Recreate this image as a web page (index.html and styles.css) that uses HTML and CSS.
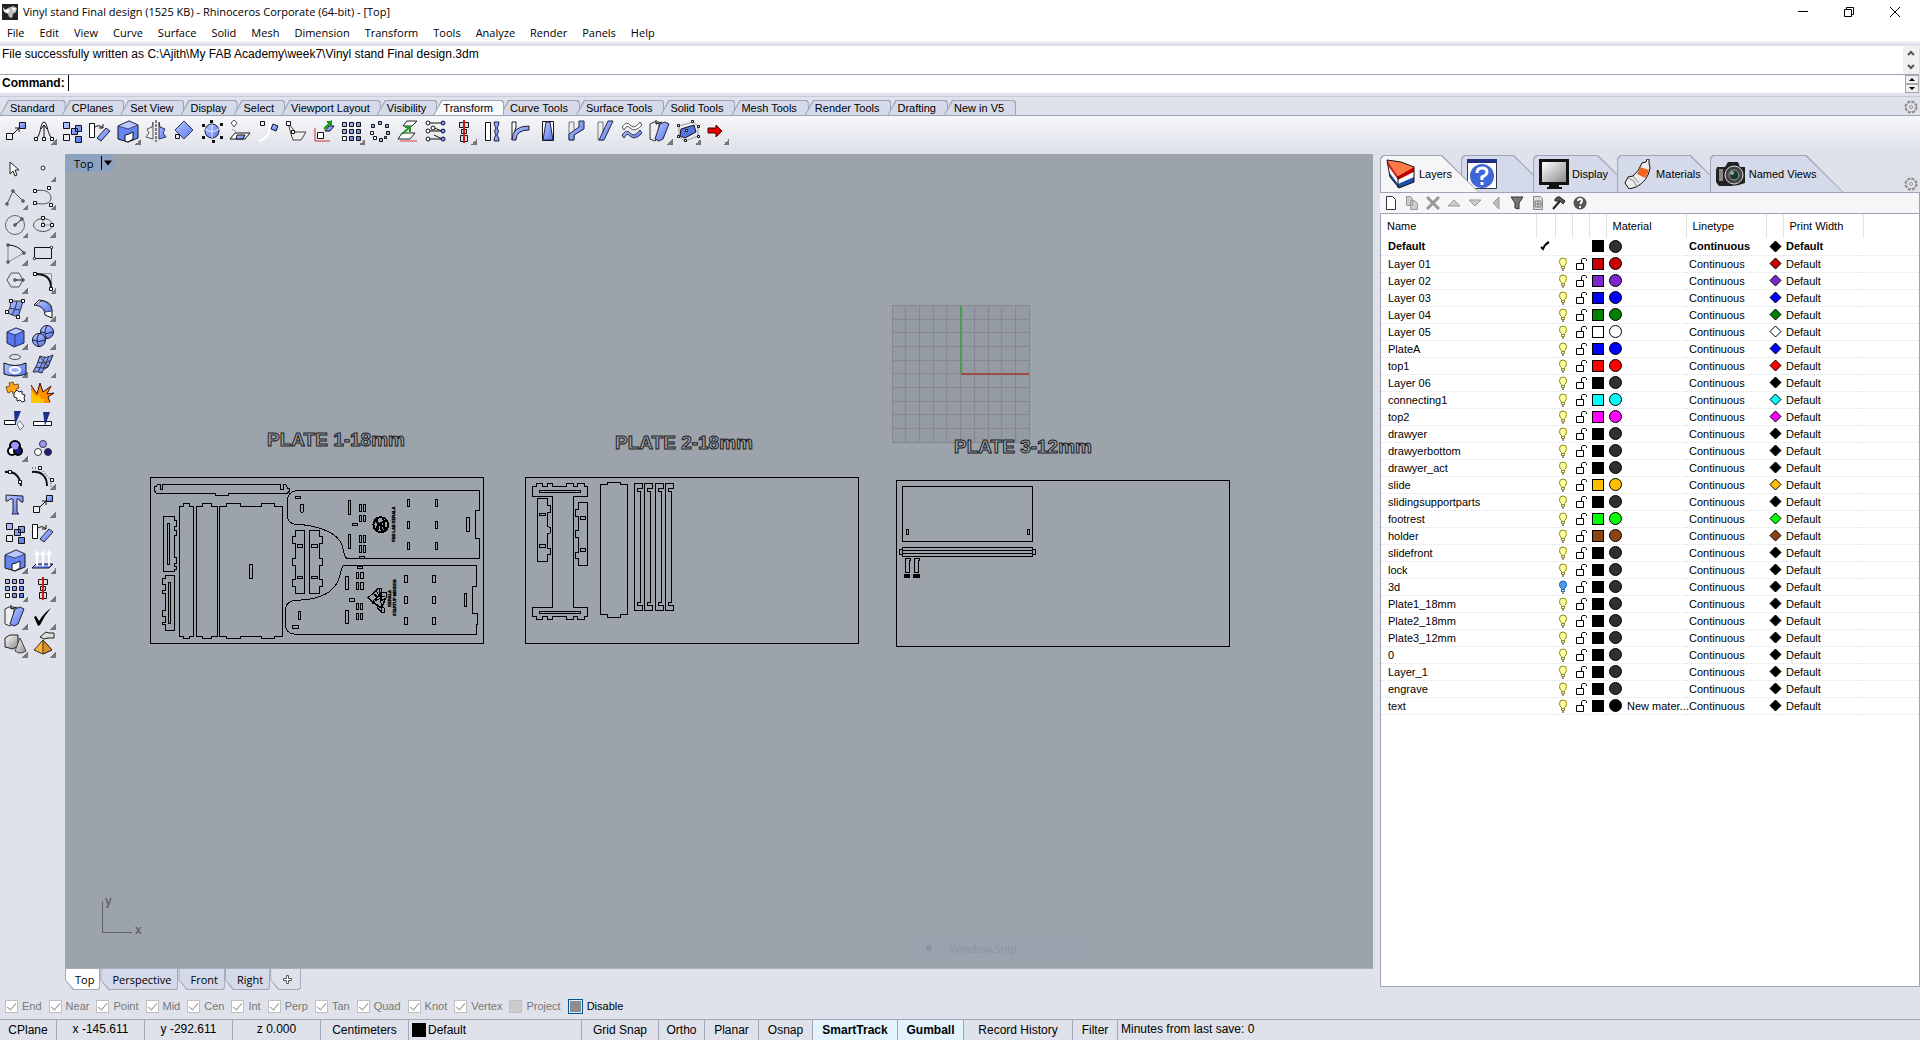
FILE: index.html
```html
<!DOCTYPE html>
<html lang="en">
<head>
    <meta charset="UTF-8">
    <title>Vinyl stand Final design (1525 KB) - Rhinoceros Corporate (64-bit) - [Top]</title>
    <link rel="stylesheet" href="styles.css">
</head>
<body>
<!-- icon sprite -->
<svg class="sprite" aria-hidden="true">
    <defs>
        <linearGradient id="blue" x1="0" y1="0" x2="1" y2="1"><stop offset="0" stop-color="#b9c8ff"/><stop offset="1" stop-color="#5577ee"/></linearGradient>
        <linearGradient id="grey" x1="0" y1="0" x2="1" y2="1"><stop offset="0" stop-color="#ffffff"/><stop offset="1" stop-color="#8a8a8a"/></linearGradient>
    </defs>
    <symbol id="cursor" viewBox="0 0 28 28"><path d="M9 8v12l3-3 2 5 2-1-2-5h4z" fill="#fff" stroke="#222"/></symbol>
    <symbol id="point" viewBox="0 0 28 28"><circle cx="14" cy="14" r="2" fill="#fff" stroke="#222"/></symbol>
    <symbol id="polyline" viewBox="0 0 28 28"><path d="M6 22l6-13 10 10" fill="none" stroke="#555"/><g fill="#fff" stroke="#111"><circle cx="6" cy="22" r="1.2"/><circle cx="12" cy="9" r="1.2"/><circle cx="22" cy="19" r="1.2"/></g></symbol>
    <symbol id="curve" viewBox="0 0 28 28"><path d="M6 9c8-2 16 0 16 7 0 6-8 7-16 5" fill="none" stroke="#555"/><path class="pt" d="M4.500 7.500h3v3h-3zM18.500 4.500h3v3h-3zM4.500 19.500h3v3h-3zM20.500 21.500h3v3h-3z"/></symbol>
    <symbol id="circle" viewBox="0 0 28 28"><circle cx="14" cy="15" r="9.500" fill="none" stroke="#666"/><path d="M14 15l7-6" stroke="#111"/><g fill="#fff" stroke="#111"><circle cx="14" cy="15" r="1.200"/><circle cx="21" cy="9" r="1.200"/></g></symbol>
    <symbol id="ellipse" viewBox="0 0 28 28"><ellipse cx="14" cy="15" rx="9.500" ry="6.500" fill="none" stroke="#555"/><path d="M14 8v7h9" fill="none" stroke="#888"/><path class="pt" d="M12.500 6.500h3v3h-3zM12.500 13.500h3v3h-3zM21.500 13.500h3v3h-3z"/></symbol>
    <symbol id="arc" viewBox="0 0 28 28"><path d="M7 7v17l16-9" fill="none" stroke="#888"/><path d="M7 7q10 0 16 8" fill="none" stroke="#111"/><g fill="#fff" stroke="#111"><circle cx="7" cy="7" r="1.200"/><circle cx="7" cy="24" r="1.200"/><circle cx="23" cy="15" r="1.200"/></g></symbol>
    <symbol id="rectangle" viewBox="0 0 28 28"><path d="M5.500 9.500h17v11h-17z" fill="none" stroke="#111"/><g fill="#fff" stroke="#111"><circle cx="22.500" cy="9.500" r="1.200"/><circle cx="5.500" cy="20.500" r="1.200"/></g></symbol>
    <symbol id="polygon" viewBox="0 0 28 28"><path d="M6 14l4-7h8l4 7-4 7h-8z" fill="none" stroke="#555"/><path d="M14 14h8" stroke="#111"/><g fill="#fff" stroke="#111"><circle cx="14" cy="14" r="1.200"/><circle cx="22" cy="14" r="1.200"/></g></symbol>
    <symbol id="fillet" viewBox="0 0 28 28"><path d="M6 7.500h16.500v14" fill="none" stroke="#999"/><path d="M6 8c10 0 16 3 16 14" fill="none" stroke="#111" stroke-width="2"/><path class="pt" d="M4.500 6.500h3v3h-3zM20.500 21.500h3v3h-3z"/></symbol>
    <symbol id="surface" viewBox="0 0 28 28"><path d="M10 7h12q-2 8-5 16l-11-4q4-5 4-12z" fill="url(#blue)" stroke="#334"/><path d="M16 7q-1 8-5 14M8 14l11 2" fill="none" stroke="#334"/><path class="pt" d="M8.500 5.500h3v3h-3zM20.500 5.500h3v3h-3zM15.500 21.500h3v3h-3zM4.500 16.500h3v3h-3z"/></symbol>
    <symbol id="sweep" viewBox="0 0 28 28"><path d="M5 11l5-5q13 1 13 10v8l-7-3q0-9-11-10z" fill="#fff" stroke="#111"/><path d="M12 7q10 1 11 10l-7 1q-1-5-9-7z" fill="url(#blue)" stroke="#446"/></symbol>
    <symbol id="box" viewBox="0 0 28 28"><path d="M6 10l9-4 8 3v12l-10 4-7-4z" fill="#5577ee" stroke="#224"/><path d="M6 10l9-4 8 3-9 4z" fill="#b9c8ff" stroke="#336"/><path d="M14 13v12" stroke="#336"/></symbol>
    <symbol id="spheres" viewBox="0 0 28 28"><g fill="url(#blue)" stroke="#112"><circle cx="18" cy="10" r="6.500"/><circle cx="10" cy="18" r="6.500"/></g><path d="M18 4q-4 6 0 13M12 10q6 3 12 0M10 12q-4 6 0 12M4 18q6 3 12 0" fill="none" stroke="#224"/></symbol>
    <symbol id="project" viewBox="0 0 28 28"><ellipse cx="14" cy="7" rx="5.500" ry="2.500" fill="none" stroke="#555"/><path d="M3 13q11 5 22 0v11q-11 4-22 0z" fill="url(#blue)" stroke="#111"/><ellipse cx="14" cy="20" rx="5" ry="3" fill="#9fb4ff" stroke="#fff" stroke-width="2"/></symbol>
    <symbol id="mesh" viewBox="0 0 28 28"><path d="M11 6q6 3 13-1l-5 12q-6 2-6 6-4-2-9-1 5-8 7-16z" fill="url(#blue)" stroke="#223"/><path d="M16 7l-7 15M20 6l-6 13M9 12q6 3 13-2M7 17q6 2 12 0M11 7l8 9" fill="none" stroke="#334"/></symbol>
    <symbol id="join" viewBox="0 0 28 28"><path d="M5 9l4-1-1-3 4-1 1 3 4-1 1 4-3 1 1 4-4 1-1-3-4 2z" fill="#ffa712" stroke="#753"/><path d="M13 15l3-3 2 2 3-1 0 3 3 1-1 3 1 3-3 1-2-2-3 1 0-3-3-1z" fill="#fff" stroke="#222"/></symbol>
    <symbol id="explode" viewBox="0 0 28 28"><path d="M2 25V7l6 9 3-11 3 9 8-6-4 8 7-1-6 4 2 6z" fill="#ff8c00"/><path d="M2 7l6 9 3-11 3 9 8-6-4 8 7-1-6 4 2 5" fill="none" stroke="#311"/><path d="M2 25V12l5 7 3-3 2 5 4 0-2 4z" fill="#ffc400"/></symbol>
    <symbol id="trim" viewBox="0 0 28 28"><path d="M3.500 14.500h11v4h-11z" fill="#fff" stroke="#111"/><path d="M16 18l3-3 4 5-4 4z" fill="#eee" stroke="#777"/><path d="M13 5h7l-6 14z" fill="#1c2f88"/></symbol>
    <symbol id="split" viewBox="0 0 28 28"><path d="M4.500 15.500h18v4h-18z" fill="#fff" stroke="#111"/><path d="M14 6h7l-5 14z" fill="#1c2f88"/></symbol>
    <symbol id="group" viewBox="0 0 28 28"><g stroke="#000" stroke-width="2"><circle cx="14" cy="12" r="5" fill="#99f"/><circle cx="11" cy="17" r="4" fill="#fff"/><circle cx="17" cy="17" r="4" fill="#1b1b80"/></g><circle cx="14" cy="12" r="3.500" fill="#99f"/></symbol>
    <symbol id="ungroup" viewBox="0 0 28 28"><g stroke="#333"><circle cx="14" cy="10" r="3.500" fill="#99f"/><circle cx="9" cy="18" r="3.500" fill="#fff"/><circle cx="19" cy="18" r="3.500" fill="#1b1b80"/></g></symbol>
    <symbol id="editpts" viewBox="0 0 28 28"><path d="M4 10c10-1 15 4 16 14" fill="none" stroke="#111" stroke-width="2"/><path class="pt" d="M7.500 8.500h3v3h-3zM17.500 18.500h3v3h-3z"/></symbol>
    <symbol id="ctrlpts" viewBox="0 0 28 28"><path d="M3 6h8l11 12v8" fill="none" stroke="#111" stroke-dasharray="1 2"/><path d="M3 10c9-1 15 4 15 14" fill="none" stroke="#111" stroke-width="2"/><path class="pt" d="M9.500 4.500h3v3h-3zM21.500 16.500h3v3h-3z"/></symbol>
    <symbol id="texttool" viewBox="0 0 28 28"><path d="M5 5l17 1v6h-2l-2-3-2 0v13l2 2h-7l1-2V9l-3 0-2 2h-2z" fill="url(#blue)" stroke="#223"/></symbol>
    <symbol id="move" viewBox="0 0 28 28"><path d="M11 17l6-6m-4 0h4v4" fill="none" stroke="#111"/><path d="M4.500 16.500h6v6h-6z" fill="#eee" stroke="#111"/><path d="M17.500 5.500h6v6h-6z" fill="url(#blue)" stroke="#111"/></symbol>
    <symbol id="copy" viewBox="0 0 28 28"><g fill="url(#blue)" stroke="#111"><path d="M5.500 5.500h6v6h-6zM17.500 8.500h6v6h-6zM13.500 11.500h6v6h-6zM17.500 19.500h6v6h-6z"/></g><path d="M5.500 17.500h6v6h-6z" fill="#eee" stroke="#111"/></symbol>
    <symbol id="rotate" viewBox="0 0 28 28"><path d="M3.500 6.500h5v14h-5z" fill="#fff" stroke="#111"/><path d="M9 10q4-3 8 1m0-4v4h-4" fill="none" stroke="#111"/><path d="M11 21l9-10 4 3-9 10z" fill="url(#blue)" stroke="#223"/></symbol>
    <symbol id="solidbox" viewBox="0 0 28 28"><path d="M4 9l11-5 9 4v13l-10 4-10-3z" fill="#6685f5" stroke="#111"/><path d="M4 9l11-5 9 4-10 4z" fill="#b9c8ff" stroke="#446"/><path d="M11 18l4-1 4-2v7l-5 3-3-1z" fill="#fff" stroke="#111"/></symbol>
    <symbol id="extrude" viewBox="0 0 28 28"><path d="M3 22l4-4h17l-4 4z" fill="url(#blue)" stroke="#113"/><path d="M8 20V7M14 20V7M20 20V7M6 9l2-3 2 3M12 9l2-3 2 3M18 9l2-3 2 3" fill="none" stroke="#fff" stroke-width="2"/></symbol>
    <symbol id="array" viewBox="0 0 28 28"><g fill="url(#blue)" stroke="#111"><path d="M4.500 5.500h4v4h-4zM11.500 5.500h4v4h-4zM18.500 5.500h4v4h-4zM4.500 12.500h4v4h-4zM11.500 12.500h4v4h-4zM18.500 12.500h4v4h-4zM11.500 19.500h4v4h-4zM18.500 19.500h4v4h-4z"/></g><path d="M4.500 19.500h4v4h-4z" fill="#fff" stroke="#111"/></symbol>
    <symbol id="align" viewBox="0 0 28 28"><path d="M9.500 5.500h9v5h-9zM11.500 12.500h5v4h-5zM10.500 18.500h7v6h-7z" fill="#ddd" stroke="#111"/><path d="M14 3v23" stroke="#d01818" stroke-width="2"/></symbol>
    <symbol id="shear" viewBox="0 0 28 28"><path d="M4 7l4-2h5v15l-4 4-5-2z" fill="#eee" stroke="#333"/><path d="M10 3v4l6-2" fill="none" stroke="#111"/><path d="M14 7l5-2 4 2-6 15-4 2-4-2z" fill="url(#blue)" stroke="#223"/></symbol>
    <symbol id="check" viewBox="0 0 28 28"><path d="M5 15l2-1 3 5q5-8 12-13-7 8-11 17l-2 1z" fill="#000"/></symbol>
    <symbol id="shapes" viewBox="0 0 28 28"><path d="M4 8l5-3h8v11l-5 3-8-2z" fill="url(#grey)" stroke="#222"/><path d="M19 8l6 13q-6 4-11 0z" fill="url(#grey)" stroke="#444"/></symbol>
    <symbol id="pyramid" viewBox="0 0 28 28"><path d="M5 20l9-10 9 10-9 4z" fill="#f9b233" stroke="#333"/><path d="M14 10v14l9-4z" fill="#e0902a" stroke="#333"/><path d="M11 7l6-5 3 1h5v5h-6l-4 1z" fill="#ddd" stroke="#222"/></symbol>
    <symbol id="softmove" viewBox="0 0 28 28"><path d="M6 21c5-1 4-16 8-16s3 15 9 16" fill="none" stroke="#111"/><path d="M14 22V8m-3 4l3-4 3 4" fill="none" stroke="#111"/><path class="pt" d="M4.500 20.500h3v3h-3zM12.500 20.500h3v3h-3zM20.500 20.500h3v3h-3z"/></symbol>
    <symbol id="mirror" viewBox="0 0 28 28"><path d="M11 5v17l-7-2 3-4-2-4 5-2z" fill="#eee" stroke="#555"/><path d="M14 3v22" stroke="#111" stroke-dasharray="3 1"/><path d="M17 5v17l7-2-3-4 2-4-5-2z" fill="url(#blue)" stroke="#335"/></symbol>
    <symbol id="diamond" viewBox="0 0 28 28"><path d="M14 4l9 9-9 9-9-9z" fill="url(#blue)" stroke="#335"/><path d="M5.500 17.500h4v4h-4z" fill="#eee" stroke="#111"/></symbol>
    <symbol id="spherepts" viewBox="0 0 28 28"><circle cx="14" cy="14" r="7" fill="url(#blue)" stroke="#113"/><path d="M14 7v14M7 12q7 5 14 0" fill="none" stroke="#eef"/><path d="M4 7h3v3h-3zM12 3h3v3h-3zM22 6h3v3h-3zM4 19h3v3h-3zM14 23h3v3h-3zM22 19h3v3h-3z" fill="#111"/></symbol>
    <symbol id="projectpl" viewBox="0 0 28 28"><path d="M8 3l3 3-3 4-3-4z" fill="#fff" stroke="#555"/><path d="M6 12l4 3" stroke="#999"/><path d="M4 22l5-6h15l-5 6z" fill="#fff" stroke="#111"/><path d="M11 18h8l-2 4h-7z" fill="url(#blue)" stroke="#111"/></symbol>
    <symbol id="orientcrv" viewBox="0 0 28 28"><path d="M5 24q14-4 10-22" fill="none" stroke="#fff" stroke-width="2"/><path class="pt" d="M6.500 4.500h4v4h-4z"/><path d="M19 7l5 2-2 5-5-2z" fill="url(#blue)" stroke="#113"/></symbol>
    <symbol id="orientsrf" viewBox="0 0 28 28"><path d="M6 6l5 6 2 3h11l-5 8h-8l-2-6z" fill="#eee" stroke="#444"/><path d="M4.500 4.500h4v4h-4zM9.500 13.500h3v3h-3z" fill="#fff" stroke="#111"/></symbol>
    <symbol id="remap" viewBox="0 0 28 28"><path d="M5 24V11M5 24h15" fill="none" stroke="#c33"/><path d="M7.500 15.500h6v6h-6z" fill="#fff" stroke="#111"/><path d="M15 14l4-5h5l-4 5z" fill="#8aa0ff" stroke="#111"/><path d="M14 12l7-7v4m0-4h-4" fill="none" stroke="#191" stroke-width="2"/></symbol>
    <symbol id="polar" viewBox="0 0 28 28"><g fill="#9db0ff" stroke="#111"><path d="M12.500 4.500h3v3h-3zM19.500 7.500h3v3h-3zM20.500 14.500h3v3h-3zM13.500 21.500h3v3h-3zM5.500 7.500h3v3h-3zM18.500 19.500h2v2h-2z"/></g><path class="pt" d="M4.500 14.500h3v3h-3zM7.500 19.500h3v3h-3z"/></symbol>
    <symbol id="flow" viewBox="0 0 28 28"><path d="M13 4h10l-5 5H9zM8 16h13l-5 6H4z" fill="#fff" stroke="#222"/><path d="M8 17l8-7m-5 0h5v5" fill="none" stroke="#292" stroke-width="2"/><path d="M6 24h17" stroke="#d44"/></symbol>
    <symbol id="maps" viewBox="0 0 28 28"><path d="M7 6h13M7 14h13M7 22h13M12 11l8 3M12 18l8 4" stroke="#111"/><g fill="#fff" stroke="#111"><circle cx="6" cy="6" r="2"/><circle cx="11" cy="11" r="2"/><circle cx="6" cy="14" r="2"/><circle cx="6" cy="22" r="2"/></g><g fill="#79f" stroke="#113"><circle cx="21" cy="6" r="2"/><circle cx="21" cy="14" r="2"/><circle cx="21" cy="22" r="2"/></g></symbol>
    <symbol id="twist" viewBox="0 0 28 28"><path d="M7.500 5.500h5v18h-5z" fill="#fff" stroke="#111"/><path d="M16 5h5q0 3-2 6 3 3 0 7 2 2 2 6h-5q0-4 2-6-3-4 0-7-2-3-2-6z" fill="#8ba2f5" stroke="#224"/></symbol>
    <symbol id="bend" viewBox="0 0 28 28"><path d="M6 23V5h4v5z" fill="#fff" stroke="#222"/><path d="M6 23q0-14 17-14v4q-13 0-13 10z" fill="url(#blue)" stroke="#223"/></symbol>
    <symbol id="taper" viewBox="0 0 28 28"><path d="M8.500 4.500h11v19h-11z" fill="#fff" stroke="#111"/><path d="M12 5h4l3 18H9z" fill="url(#blue)" stroke="#224"/></symbol>
    <symbol id="stretch" viewBox="0 0 28 28"><path d="M7 5h5v18H7z" fill="#eee" stroke="#777"/><path d="M7 23v-6l10-7V4h5v8l-10 6v5z" fill="url(#blue)" stroke="#224"/></symbol>
    <symbol id="slant" viewBox="0 0 28 28"><path d="M8 5h5v18H8z" fill="#eee" stroke="#777"/><path d="M9 23L18 4h5l-9 19z" fill="url(#blue)" stroke="#224"/></symbol>
    <symbol id="waves" viewBox="0 0 28 28"><path d="M4 10q5-7 9-1 4 3 9-4l2 3q-7 8-12 3-3-4-6 2z" fill="#fff" stroke="#555"/><path d="M4 18q5-7 9-1 4 3 9-4l2 3q-7 8-12 3-3-4-6 2z" fill="url(#blue)" stroke="#335"/></symbol>
    <symbol id="cage" viewBox="0 0 28 28"><path d="M5 9l14-4 5 4v10l-13 5-6-4z" fill="none" stroke="#999"/><path d="M7 12l13-4 2 7-11 6-5-2z" fill="#5577dd" stroke="#112"/><path class="pt" d="M3.500 7.500h2v2h-2zM17.500 3.500h2v2h-2zM23.500 8.500h2v2h-2zM23.500 18.500h2v2h-2zM10.500 22.500h2v2h-2zM3.500 18.500h2v2h-2zM11.500 12.500h2v2h-2z"/></symbol>
    <symbol id="redarrow" viewBox="0 0 28 28"><path d="M6 11h8V8l6 6-6 6v-4H6z" fill="#e30000" stroke="#500"/></symbol>

    <symbol id="gear" viewBox="0 0 14 14"><circle cx="7" cy="7" r="5.500" fill="#eee" stroke="#888" stroke-width="2" stroke-dasharray="3 1.300"/><circle cx="7" cy="7" r="4.500" fill="#e6e8ee" stroke="#aaa"/><circle cx="7" cy="7" r="1.500" fill="#fff" stroke="#888"/></symbol>
    <symbol id="bulb" viewBox="0 0 10 14"><path d="M3.500 9.500v-1q-2-1-2-4a3.500 3.500 0 0 1 7 0q0 3-2 4v1z" fill="var(--glow)" stroke="var(--rim)"/><path d="M3.500 9.500v2h3v-2z" fill="#fff" stroke="var(--rim)"/><path d="M4 13h2" stroke="#333"/></symbol>
    <symbol id="lock" viewBox="0 0 12 14"><path d="M1.500 6.500h7v6h-7z" fill="#fff" stroke="#000"/><path d="M6.500 6V3l1-1.500h3l1 1V4" fill="none" stroke="#000"/></symbol>
    <symbol id="tick" viewBox="0 0 10 10"><path d="M1 6l2 2q2-5 6-7" fill="none" stroke="#000" stroke-width="2"/></symbol>

    <symbol id="newdoc" viewBox="0 0 14 14"><path d="M2.500.500h6l3 3v10h-9z" fill="#fff" stroke="#333"/></symbol>
    <symbol id="newsub" viewBox="0 0 14 14"><path d="M1.500.500h4l2 2v7h-6zM5.500 4.500h4l3 3v6h-7z" fill="#ccc" stroke="#999"/></symbol>
    <symbol id="del" viewBox="0 0 14 14"><path d="M1 1l12 12M13 1L1 13" stroke="#999" stroke-width="3"/></symbol>
    <symbol id="up" viewBox="0 0 14 14"><path d="M1 10l6-6 6 6z" fill="#ccc" stroke="#999"/></symbol>
    <symbol id="down" viewBox="0 0 14 14"><path d="M1 4l6 6 6-6z" fill="#ccc" stroke="#999"/></symbol>
    <symbol id="left" viewBox="0 0 14 14"><path d="M10 1v12L4 7z" fill="#bbb" stroke="#999"/></symbol>
    <symbol id="filter" viewBox="0 0 14 14"><path d="M1 1h12L9 7v6l-4-1V7z" fill="#777" stroke="#333"/></symbol>
    <symbol id="cols" viewBox="0 0 14 14"><path d="M2.500.500h7l2 2v11h-9z" fill="#ddd" stroke="#888"/><path d="M4 5h6v6H4zM4 8h6M7 5v6" fill="none" stroke="#777"/></symbol>
    <symbol id="hammer" viewBox="0 0 14 14"><path d="M1 13L8 5" stroke="#222" stroke-width="2"/><path d="M3 3q4-4 6-1l4 3-2 3-3-3-5 0z" fill="#555" stroke="#222"/></symbol>
    <symbol id="help" viewBox="0 0 14 14"><circle cx="7" cy="7" r="6.500" fill="#555"/><path d="M5 5q0-2 2-2t2 2q0 1-2 3M7 10v2" fill="none" stroke="#fff" stroke-width="2"/></symbol>
</svg>

<header class="titlebar">
    <svg class="logo" viewBox="0 0 16 16"><rect width="16" height="16" fill="#222"/><path d="M1 3l2 3 3-2 5-2 4 2-1 4-3 2-1 4-3-1-1-3-4-2z" fill="#bbb"/><path d="M1 3l2 3 3-1 2 2-3 2-3-2zM10 4l4 0-2 4z" fill="#fff"/></svg>
    <h1>Vinyl stand Final design (1525 KB) - Rhinoceros Corporate (64-bit) - [Top]</h1>
    <div class="winbuttons">
        <button aria-label="Minimize"><svg viewBox="0 0 10 10"><path d="M0 4.500h10"/></svg></button>
        <button aria-label="Restore"><svg viewBox="0 0 10 10"><path d="M.500 2.500h7v7h-7zM2.500 2V.500h7v7H8"/></svg></button>
        <button aria-label="Close"><svg viewBox="0 0 10 10"><path d="M0 0l10 10M10 0L0 10"/></svg></button>
    </div>
</header>
<nav class="menu">
    <button>File</button><button>Edit</button><button>View</button><button>Curve</button><button>Surface</button><button>Solid</button><button>Mesh</button><button>Dimension</button><button>Transform</button><button>Tools</button><button>Analyze</button><button>Render</button><button>Panels</button><button>Help</button>
</nav>

<section class="command">
    <div class="history">
        <p>File successfully written as C:\Ajith\My FAB Academy\week7\Vinyl stand Final design.3dm</p>
        <div class="scroll">
            <button aria-label="Scroll up"><svg viewBox="0 0 8 6"><path d="M1 5l3-3 3 3"/></svg></button>
            <button aria-label="Scroll down"><svg viewBox="0 0 8 6"><path d="M1 1l3 3 3-3"/></svg></button>
        </div>
    </div>
    <div class="prompt">
        <label for="cmd">Command:</label>
        <input type="text" id="cmd">
        <div class="spin">
            <button aria-label="Previous"><svg viewBox="0 0 6 3"><path d="M0 3l3-3 3 3z"/></svg></button>
            <button aria-label="Next"><svg viewBox="0 0 6 3"><path d="M0 0l3 3 3-3z"/></svg></button>
        </div>
    </div>
</section>

<div class="tooltabs">
    <button>Standard</button><button>CPlanes</button><button>Set View</button><button>Display</button><button>Select</button><button>Viewport Layout</button><button>Visibility</button><button class="active">Transform</button><button>Curve Tools</button><button>Surface Tools</button><button>Solid Tools</button><button>Mesh Tools</button><button>Render Tools</button><button>Drafting</button><button>New in V5</button>
    <svg class="gear"><use href="#gear"/></svg>
</div>
<div class="toolbar">
    <button aria-label="Move"><svg><use href="#move"/></svg></button>
    <button class="more" aria-label="Soft move"><svg><use href="#softmove"/></svg></button>
    <button aria-label="Copy"><svg><use href="#copy"/></svg></button>
    <button aria-label="Rotate"><svg><use href="#rotate"/></svg></button>
    <button class="more" aria-label="Scale"><svg><use href="#solidbox"/></svg></button>
    <button aria-label="Mirror"><svg><use href="#mirror"/></svg></button>
    <button aria-label="Orient"><svg><use href="#diamond"/></svg></button>
    <button aria-label="Set points"><svg><use href="#spherepts"/></svg></button>
    <button aria-label="Project to CPlane"><svg><use href="#projectpl"/></svg></button>
    <button aria-label="Orient on curve"><svg><use href="#orientcrv"/></svg></button>
    <button aria-label="Orient on surface"><svg><use href="#orientsrf"/></svg></button>
    <button aria-label="Remap to CPlane"><svg><use href="#remap"/></svg></button>
    <button class="more" aria-label="Array"><svg><use href="#array"/></svg></button>
    <button aria-label="Polar array"><svg><use href="#polar"/></svg></button>
    <button aria-label="Flow along surface"><svg><use href="#flow"/></svg></button>
    <button aria-label="Array along curve"><svg><use href="#maps"/></svg></button>
    <button class="more" aria-label="Align"><svg><use href="#align"/></svg></button>
    <button aria-label="Twist"><svg><use href="#twist"/></svg></button>
    <button aria-label="Bend"><svg><use href="#bend"/></svg></button>
    <button aria-label="Taper"><svg><use href="#taper"/></svg></button>
    <button aria-label="Stretch"><svg><use href="#stretch"/></svg></button>
    <button aria-label="Shear"><svg><use href="#slant"/></svg></button>
    <button aria-label="Smooth"><svg><use href="#waves"/></svg></button>
    <button class="more" aria-label="Deform"><svg><use href="#shear"/></svg></button>
    <button class="more" aria-label="Cage edit"><svg><use href="#cage"/></svg></button>
    <button class="more" aria-label="Next"><svg><use href="#redarrow"/></svg></button>
</div>

<main>
    <aside class="sidebar">
        <button aria-label="Select"><svg><use href="#cursor"/></svg></button>
        <button class="more" aria-label="Point"><svg><use href="#point"/></svg></button>
        <button class="more" aria-label="Polyline"><svg><use href="#polyline"/></svg></button>
        <button class="more" aria-label="Curve"><svg><use href="#curve"/></svg></button>
        <button class="more" aria-label="Circle"><svg><use href="#circle"/></svg></button>
        <button class="more" aria-label="Ellipse"><svg><use href="#ellipse"/></svg></button>
        <button class="more" aria-label="Arc"><svg><use href="#arc"/></svg></button>
        <button class="more" aria-label="Rectangle"><svg><use href="#rectangle"/></svg></button>
        <button class="more" aria-label="Polygon"><svg><use href="#polygon"/></svg></button>
        <button class="more" aria-label="Fillet"><svg><use href="#fillet"/></svg></button>
        <button class="more" aria-label="Surface from points"><svg><use href="#surface"/></svg></button>
        <button class="more" aria-label="Fillet surface"><svg><use href="#sweep"/></svg></button>
        <button class="more" aria-label="Box"><svg><use href="#box"/></svg></button>
        <button class="more" aria-label="Boolean union"><svg><use href="#spheres"/></svg></button>
        <button class="more" aria-label="Project curves"><svg><use href="#project"/></svg></button>
        <button class="more" aria-label="Mesh"><svg><use href="#mesh"/></svg></button>
        <button aria-label="Join"><svg><use href="#join"/></svg></button>
        <button aria-label="Explode"><svg><use href="#explode"/></svg></button>
        <button aria-label="Trim"><svg><use href="#trim"/></svg></button>
        <button aria-label="Split"><svg><use href="#split"/></svg></button>
        <button class="more" aria-label="Group"><svg><use href="#group"/></svg></button>
        <button aria-label="Ungroup"><svg><use href="#ungroup"/></svg></button>
        <button aria-label="Edit points"><svg><use href="#editpts"/></svg></button>
        <button class="more" aria-label="Control points"><svg><use href="#ctrlpts"/></svg></button>
        <button aria-label="Text"><svg><use href="#texttool"/></svg></button>
        <button class="more" aria-label="Move"><svg><use href="#move"/></svg></button>
        <button aria-label="Copy"><svg><use href="#copy"/></svg></button>
        <button aria-label="Rotate"><svg><use href="#rotate"/></svg></button>
        <button class="more" aria-label="Scale"><svg><use href="#solidbox"/></svg></button>
        <button class="more" aria-label="Analyze direction"><svg><use href="#extrude"/></svg></button>
        <button class="more" aria-label="Array"><svg><use href="#array"/></svg></button>
        <button class="more" aria-label="Align"><svg><use href="#align"/></svg></button>
        <button class="more" aria-label="Deform"><svg><use href="#shear"/></svg></button>
        <button class="more" aria-label="Check"><svg><use href="#check"/></svg></button>
        <button class="more" aria-label="Render"><svg><use href="#shapes"/></svg></button>
        <button class="more" aria-label="Properties"><svg><use href="#pyramid"/></svg></button>
    </aside>

    <section class="views">
        <div class="viewport">
            <svg class="drawing">
                <defs>
                    <pattern id="minor" x="67" y="46" width="41.200" height="41.200" patternUnits="userSpaceOnUse">
                        <path d="M9 7v32M17 7v32M25 7v32M33 7v32" stroke="#a3a8ae" stroke-width="2" stroke-dasharray="3 5" fill="none"/>
                    </pattern>
                    <path id="rail" d="M0 190h25v15h-15v9h7v333h-7v9h15v16h-25z"/>
                </defs>

                <!-- plate 1 -->
                <svg x="75" y="266" width="350" height="230" viewBox="0 0 1050 690">
                    <g class="ink">
                        <path d="M31 172h999v498H31z"/>
                        <path d="M52 194h8v14h8v-14h353v14h8v-14h8l5 10h6v10l-6 6h-176v6h-40v-6H49l-6-8v-12h6z"/>
                        <path d="M118 260h12v-9h18v9h13v390h-12v6h-18v-6h-13z"/>
                        <path d="M169 260h18v-9h28v9h18v390h-18v6h-28v-6h-18z"/>
                        <path d="M238 260h21v-9h43v9h62v-9h40v9h24v390h-24v6h-40v-6h-62v6h-43v-6h-21z"/>
                        <path d="M328 433h8v42h-8zM82 310h7v123h-7zM86 487h6v123h-6z"/>
                        <path d="M70 290h32v10h8v20h-8v10h8v17h-8v65h8v18h-8v9h8v10h-8v6H70z"/>
                        <path d="M103 466H76v10h-8v18h8v18h-8v8h8v50h-8v18h8v20h-8v6h8v17h27z"/>
                        <path d="M494 332h-27v18h-9v20h9v45h-9v20h9v43h-9v20h9v22h27z"/>
                        <path d="M508 332h30v18h9v20h-9v45h9v20h-9v43h9v20h-9v22h-30z"/>
                        <path d="M472 374h16v8h-16zM472 469h16v6h-16zM514 374h18v8h-18zM514 469h18v6h-18z"/>
                        <path d="M470 212h549v60h-12v82h12v61H620c-9-6-8-24-14-40-10-30-60-60-142-62-12-2-21-12-21-22v-55c0-12 12-23 27-24z"/>
                        <path d="M610 436h400v63h-12v82h14v32h-2v30H465c-15-2-28-10-28-25v-52c0-14 12-24 30-25 80-2 112-26 128-60 8-20 8-36 15-45z"/>
                        <path d="M466 229h16v6h-16zM625 241h6v42h-6zM657 253h7v22h-7zM670 253h7v22h-7zM657 286h7v18h-7zM670 286h7v18h-7zM637 310h16v6h-16zM625 343h6v42h-6zM657 346h7v20h-7zM670 346h7v20h-7zM657 376h7v20h-7zM670 376h7v20h-7zM658 409h15v6h-15z"/>
                        <path d="M802 238h7v22h-7zM886 238h7v22h-7zM802 304h7v20h-7zM886 304h7v20h-7zM802 367h7v21h-7zM886 367h7v21h-7zM979 292h10v42h-10z"/>
                        <path d="M652 439h15v6h-15zM616 469h10v40h-10zM649 457h7v18h-7zM661 457h9v18h-9zM649 487h7v20h-7zM661 487h9v20h-9zM628 536h16v8h-16zM649 550h7v18h-7zM661 550h7v18h-7zM616 571h10v39h-10zM649 580h7v18h-7zM661 580h7v18h-7z"/>
                        <path d="M793 466h9v21h-9zM877 466h9v21h-9zM793 530h9v20h-9zM877 530h9v20h-9zM793 592h9v21h-9zM877 592h9v21h-9zM973 520h7v39h-7zM475 574h7v24h-7z"/>
                        <rect x="481" y="253" width="10" height="24" rx="4"/><rect x="457" y="616" width="19" height="10" rx="5"/>
                        <path class="heavy" d="M722 292a22 22 0 1 0 1 0zM705 300l14 12 20-12M706 328l14-16 6 22M720 312l20 14M712 296l2 34M730 294l4 38"/>
                        <path d="M684 532l16-12 10 12-14 14zM700 520l14-15h10v16l-12 8zM724 516h14v18l-14 6zM700 546l20-10 14 12-14 12zM712 560l20 4v12h-8l-10-10zM690 540l24 18M708 512l24 36M698 552l26-36M718 508l8 66M706 530h30M736 536l-10 28"/>
                    </g>
                    <text class="engrave" transform="translate(765 365) rotate(-90)">FAB LAB KERALA</text>
                    <text class="engrave" transform="translate(753 560) rotate(-90)">KERALA</text>
                    <text class="engrave" transform="translate(767 588) rotate(-90)">STARTUP MISSION</text>
                </svg>
                <text class="outline" x="202" y="292">PLATE 1-18mm</text>

                <!-- plate 2 -->
                <svg x="445" y="266" width="360" height="230" viewBox="0 0 1080 690">
                    <g class="ink">
                        <path d="M46 172h1000v498H46z"/>
                        <path d="M67 199h12v-9h19v9h14v-9h15v9h42v-9h21v9h12v-9h20l2 9h9v30h-43v333h43v27h-9v9h-22v-9h-12v9h-21l-1-9h-41v9h-15v-9H98v9H79v-9H67v-27h60V229H67z"/>
                        <path d="M88 211h124v6H88zM88 574h124v6H88z"/>
                        <path d="M82 235h31v21h9v21h-9v43l9 2v16l-9 3v44h9v18h-9v21H82zM88 280h18v6H88zM88 373h18v9H88z"/>
                        <path d="M233 247h-28v21h-9v22h9v42h-9v20h9v44h-9v20h9v20h28zM211 290h16v8h-16zM211 385h16v9h-16z"/>
                        <path d="M271 193h21v-6h40v6h21v391h-21v9h-40v-9h-21z"/>
                        <use href="#rail" x="373"/><use href="#rail" x="403"/><use href="#rail" x="436"/><use href="#rail" x="466"/>
                    </g>
                </svg>
                <text class="outline" x="550" y="295">PLATE 2-18mm</text>

                <!-- construction grid and plate 3 -->
                <svg x="805" y="136" width="380" height="360" viewBox="0 0 1140 1080">
                    <rect x="67" y="46" width="412" height="412" fill="#9399a2"/>
                    <rect x="67" y="46" width="412" height="412" fill="url(#minor)"/>
                    <path class="gridline" d="M67 46h412v412H67zM107 46v412M148 46v412M190 46v412M229 46v412M272 46v412M313 46v412M356 46v412M395 46v412M436 46v412M67 88h412M67 127h412M67 169h412M67 211h412M67 250h412M67 292h412M67 334h412M67 373h412M67 415h412"/>
                    <path d="M273 48v202" stroke="#4a9c4f" stroke-width="6"/>
                    <path d="M273 252h204" stroke="#a04a4a" stroke-width="6"/>
                    <g class="ink">
                        <path d="M79 571h1000v498H79zM97 589h391v165H97z"/>
                        <path d="M97 772h391v27H97zM97 781h391M97 790h391M97 778h-9v16h9M488 778h9v16h-9"/>
                        <rect x="109" y="718" width="7" height="15" rx="3"/><path d="M472 718h6v15h-6z"/>
                        <path d="M106 805h16v6h-3v37h-13zM133 805h16v6h-3v37h-13z"/>
                        <path class="solid" d="M103 853h16v9h-16zM131 853h18v9h-18z"/>
                    </g>
                </svg>
                <text class="outline" x="889" y="299">PLATE 3-12mm</text>
            </svg>
            <button class="viewname">Top<svg viewBox="0 0 8 5"><path d="M0 0h8L4 5z"/></svg></button>
            <svg class="axes" viewBox="0 0 44 44"><path d="M2.500 10v30.500H32"/><text x="5" y="13">y</text><text x="35" y="42">x</text></svg>
            <div class="snip"><i></i>Window Snip</div>
        </div>
        <div class="viewtabs">
            <button class="active">Top</button><button>Perspective</button><button>Front</button><button>Right</button><button class="add" aria-label="New viewport"><svg viewBox="0 0 9 9"><path d="M3.500.500h2v3h3v2h-3v3h-2v-3h-3v-2h3z"/></svg></button>
        </div>
    </section>

    <section class="panel">
        <div class="paneltabs">
            <button class="active">
                <svg viewBox="0 0 30 30"><path d="M1 1l14 2 13 5-16 9z" fill="#ff7a45"/><path d="M1 1l11 16v4L2 7z" fill="#d42020"/><path d="M12 17l16-9v5l-16 8z" fill="#c40000"/><path d="M2 7l10 14 16-8v5l-16 7L3 13z" fill="#fff"/><path d="M3 13l9 12 16-7v5l-15 6L4 18z" fill="#1e4fb0"/><path d="M1 1l14 2 13 5v15l-15 6-9-11zM12 17v12" fill="none" stroke="#111"/></svg>Layers</button>
            <button class="blank" aria-label="Help">
                <svg viewBox="0 0 30 30"><path d="M.500.500h29v29H.500z" fill="#fff" stroke="#335"/><path d="M0 0h30v4H0z" fill="#223080"/><circle cx="15" cy="17" r="12" fill="#3f66d8"/><path d="M10 14q0-5 5-5t5 4q0 3-5 5v3M15 23v3" fill="none" stroke="#fff" stroke-width="3"/></svg></button>
            <button>
                <svg viewBox="0 0 30 30"><path d="M0 0h30v26H0z" fill="#111"/><path d="M3 3h24v20H3z" fill="url(#grey)"/><path d="M10 26h10v2h3v2H8v-2h2z" fill="#111"/></svg>Display</button>
            <button>
                <svg viewBox="0 0 30 30"><path d="M19 4l4-1 1-3 2 0v4l1 5q-2 13-14 19l-7 2-4-6 3-6 5-1q6-5 9-13z" fill="#eee" stroke="#111"/><path d="M17 8l9 3q-1 4-4 8l-8-4q2-3 3-7z" fill="#f26522"/><path d="M5 19l6 3 2 5M10 17l6 7" fill="none" stroke="#888"/></svg>Materials</button>
            <button>
                <svg viewBox="0 0 30 30"><path d="M1 8h8l3-5h10l2 5h5v16q-7 3-14 3H3l-3-4V11z" fill="#222"/><path d="M3 10h4v12H3z" fill="#888"/><circle cx="18" cy="16" r="9" fill="#444" stroke="#ddd"/><circle cx="18" cy="16" r="5" fill="#1c3a28" stroke="#999"/><circle cx="16" cy="14" r="2" fill="#8ab"/></svg>Named Views</button>
            <svg class="gear"><use href="#gear"/></svg>
        </div>
        <div class="paneltools">
            <button aria-label="New layer"><svg><use href="#newdoc"/></svg></button>
            <button aria-label="New sublayer"><svg><use href="#newsub"/></svg></button>
            <button aria-label="Delete"><svg><use href="#del"/></svg></button>
            <button aria-label="Move up"><svg><use href="#up"/></svg></button>
            <button aria-label="Move down"><svg><use href="#down"/></svg></button>
            <button aria-label="Move up one parent"><svg><use href="#left"/></svg></button>
            <button aria-label="Filter"><svg><use href="#filter"/></svg></button>
            <button aria-label="Columns"><svg><use href="#cols"/></svg></button>
            <button aria-label="Tools"><svg><use href="#hammer"/></svg></button>
            <button aria-label="Help"><svg><use href="#help"/></svg></button>
        </div>
        <div class="layerlist">
            <table>
                <colgroup>
                    <col class="c-name"><col class="c-current"><col class="c-icon"><col class="c-icon"><col class="c-icon"><col class="c-text"><col class="c-text"><col class="c-icon"><col class="c-text"><col>
                </colgroup>
                <thead>
                    <tr><th>Name</th><th></th><th></th><th></th><th></th><th>Material</th><th>Linetype</th><th></th><th>Print Width</th><th></th></tr>
                </thead>
                <tbody id="layers"></tbody>
            </table>
        </div>
    </section>
</main>

<div class="osnap">
    <label><input type="checkbox" checked disabled>End</label>
    <label><input type="checkbox" checked disabled>Near</label>
    <label><input type="checkbox" checked disabled>Point</label>
    <label><input type="checkbox" checked disabled>Mid</label>
    <label><input type="checkbox" checked disabled>Cen</label>
    <label><input type="checkbox" checked disabled>Int</label>
    <label><input type="checkbox" checked disabled>Perp</label>
    <label><input type="checkbox" checked disabled>Tan</label>
    <label><input type="checkbox" checked disabled>Quad</label>
    <label><input type="checkbox" checked disabled>Knot</label>
    <label><input type="checkbox" checked disabled>Vertex</label>
    <label><input type="checkbox" class="off" disabled>Project</label>
    <label class="on"><input type="checkbox" class="filled">Disable</label>
</div>
<footer class="status">
    <button>CPlane</button>
    <span>x -145.611</span>
    <span>y -292.611</span>
    <span>z 0.000</span>
    <button>Centimeters</button>
    <button class="layer"><i></i>Default</button>
    <button>Grid Snap</button>
    <button>Ortho</button>
    <button>Planar</button>
    <button>Osnap</button>
    <button class="lit">SmartTrack</button>
    <button class="lit">Gumball</button>
    <button>Record History</button>
    <button>Filter</button>
    <span class="save">Minutes from last save: 0</span>
</footer>
<script src="script.js"></script>
</body>
</html>
```
FILE: styles.css
```css
* {
    box-sizing: border-box;
}
body {
    margin: 0;
    height: 100vh;
    display: flex;
    flex-direction: column;
    overflow: hidden;
    background: #dfe2ea;
    color: #000;
    font: 11px "Liberation Sans", Arial, sans-serif;
}
button {
    padding: 0;
    border: 0;
    background: none;
    color: inherit;
    font: inherit;
    white-space: nowrap;
}
svg {
    display: block;
}
.sprite {
    position: absolute;
    width: 0;
    height: 0;
}
.pt {
    fill: #fff;
    stroke: #111;
}

/* title and menu */
.titlebar {
    display: flex;
    align-items: center;
    height: 23px;
    background: #fff;
    padding-left: 2px;
    gap: 5px;
}
.logo {
    width: 16px;
    height: 16px;
}
.titlebar h1 {
    flex: 1;
    margin: 0;
    font: 11px "Open Sans", sans-serif;
}
.winbuttons {
    display: flex;
    padding-right: 2px;
}
.winbuttons button {
    width: 46px;
    height: 20px;
}
.winbuttons svg {
    width: 10px;
    height: 10px;
    margin: 0 auto;
    fill: none;
    stroke: #000;
}
.menu {
    display: flex;
    height: 20px;
    padding-left: 7px;
    gap: 15px;
    background: #fff;
    border-bottom: 2px solid #f0f0f0;
    font: 11px "Open Sans", sans-serif;
}

/* command area */
.command {
    margin: 3px 1px 3px 0;
    background: #fff;
    font-size: 12px;
}
.history {
    display: flex;
    height: 28px;
}
.history p {
    flex: 1;
    margin: 0;
    padding-left: 2px;
    line-height: 16px;
}
.scroll {
    width: 16px;
    background: #f0f0f0;
}
.scroll button {
    display: block;
    width: 16px;
    height: 14px;
}
.scroll svg {
    width: 8px;
    height: 6px;
    margin: 0 auto;
    fill: none;
    stroke: #555;
    stroke-width: 2px;
}
.prompt {
    display: flex;
    height: 19px;
    padding-left: 2px;
    gap: 3px;
    border-top: 1px solid #98a3b3;
    line-height: 16px;
}
.prompt label {
    font-weight: bold;
}
.prompt input {
    flex: 1;
    height: 16px;
    padding: 0 2px;
    border: 0;
    border-left: 1px solid #000;
    outline: 0;
    font: inherit;
}
.spin {
    display: flex;
    flex-direction: column;
}
.spin button {
    width: 14px;
    height: 9px;
    background: #f0f0f0;
    border: 1px solid #aaa;
}
.spin svg {
    width: 6px;
    height: 3px;
    margin: 0 auto;
}

/* toolbar tabs */
.tooltabs {
    display: flex;
    align-items: flex-end;
    height: 20px;
    border-top: 1px solid #c6cbd7;
    border-bottom: 1px solid #9da5b5;
}
.tooltabs button {
    position: relative;
    z-index: 0;
    height: 15px;
    padding: 0 11px 0 10px;
    margin-right: -4px;
    background: #9da5b5;
    clip-path: polygon(8px 0, calc(100% - 2px) 0, 100% 2px, 100% 100%, 0 100%);
}
.tooltabs button::before {
    content: "";
    position: absolute;
    z-index: -1;
    inset: 1px 1px 0 1px;
    background: #d5daea;
    clip-path: polygon(8px 0, calc(100% - 2px) 0, 100% 2px, 100% 100%, 0 100%);
}
.tooltabs .active {
    z-index: 1;
}
.tooltabs .active::before {
    background: #f8f9fb;
}
.tooltabs .active ~ button {
    padding-right: 12px;
}
.gear {
    width: 14px;
    height: 14px;
    margin: 0 2px 1px auto;
}
.toolbar {
    display: flex;
    height: 38px;
    padding: 1px 2px;
    background: linear-gradient(#f6f7f9, #dfe2ea 34px);
}
.toolbar button, .sidebar button {
    width: 28px;
    height: 28px;
}
.toolbar svg, .sidebar svg {
    width: 28px;
    height: 28px;
}
.more {
    background: linear-gradient(135deg, transparent 50%, #777 50%) 21px 22px / 6px 6px no-repeat;
}

/* work area */
main {
    flex: 1;
    min-height: 0;
    display: flex;
}
.sidebar {
    width: 65px;
    padding-left: 1px;
    display: grid;
    grid-template-columns: 28px 28px;
    align-content: start;
}
.views {
    flex: 1;
    display: flex;
    flex-direction: column;
    min-width: 0;
}
.viewport {
    flex: 1;
    position: relative;
    overflow: hidden;
    background: #9da3ab;
    border-bottom: 1px solid #a8afba;
}
.drawing {
    width: 100%;
    height: 100%;
}
.ink {
    fill: none;
    stroke: #000;
    shape-rendering: crispEdges;
}
.ink path, .ink rect, #rail {
    vector-effect: non-scaling-stroke;
    stroke-width: 1px;
}
.ink .heavy {
    stroke-width: 2px;
}
.ink .solid {
    fill: #000;
}
.gridline {
    fill: none;
    stroke: #858893;
    stroke-width: 3px;
    shape-rendering: crispEdges;
}
.outline {
    font: bold 19px "Liberation Sans", Arial, sans-serif;
    fill: #9da3ab;
    stroke: #000;
    stroke-width: 1px;
    stroke-opacity: .85;
}
.engrave {
    font: bold 12px "Liberation Sans", Arial, sans-serif;
    stroke: #000;
}
.viewname {
    position: absolute;
    left: 1px;
    top: 0;
    display: flex;
    align-items: center;
    height: 18px;
    padding: 0 2px 0 8px;
    background: #8ca2bf;
    font: 11px "Open Sans", sans-serif;
}
.viewname svg {
    width: 11px;
    height: 14px;
    margin-left: 8px;
    padding-left: 2px;
    border-left: 1px solid #000;
}
.axes {
    position: absolute;
    left: 35px;
    bottom: 32px;
    width: 44px;
    height: 44px;
    fill: none;
    stroke: #5c5f63;
}
.axes text {
    font: bold 12px "Liberation Sans", Arial, sans-serif;
    fill: #63666a;
    stroke: none;
}
.snip {
    position: absolute;
    left: 853px;
    bottom: 9px;
    display: flex;
    align-items: center;
    gap: 18px;
    width: 174px;
    height: 22px;
    padding-left: 8px;
    background: #99a3af;
    color: #8b929b;
    font: 11px "Open Sans", sans-serif;
}
.snip i {
    width: 6px;
    height: 6px;
    border-radius: 50%;
    background: #8b929b;
}
.viewtabs {
    display: flex;
    height: 22px;
    font: 11px "Open Sans", sans-serif;
}
.viewtabs button {
    position: relative;
    z-index: 0;
    height: 21px;
    padding: 0 7px 0 12px;
    background: #a4aab8;
    clip-path: polygon(0 0, 100% 0, 100% calc(100% - 2px), calc(100% - 2px) 100%, 8px 100%, 0 11px);
}
.viewtabs button::before {
    content: "";
    position: absolute;
    z-index: -1;
    inset: 0 1px 1px 1px;
    background: #d5daea;
    clip-path: polygon(0 0, 100% 0, 100% calc(100% - 2px), calc(100% - 2px) 100%, 8px 100%, 0 11px);
}
.viewtabs .active {
    padding: 0 6px 0 10px;
}
.viewtabs .active::before {
    background: #fff;
}
.viewtabs .add {
    padding: 0 9px 0 13px;
}
.viewtabs .add::before {
    background: #dfe2ea;
}
.viewtabs svg {
    width: 9px;
    height: 9px;
    fill: #fff;
    stroke: #555;
}

/* layers panel */
.panel {
    width: 547px;
    margin-bottom: 4px;
    padding-left: 7px;
    display: flex;
    flex-direction: column;
}
.paneltabs {
    display: flex;
    align-items: flex-end;
    height: 39px;
    border-bottom: 1px solid #9da5b5;
}
.paneltabs button {
    position: relative;
    z-index: 0;
    display: flex;
    align-items: center;
    gap: 3px;
    height: 37px;
    padding: 0 27px 0 6px;
    margin-right: -18px;
    background: #9da5b5;
    clip-path: polygon(0 3px, 3px 0, calc(100% - 37px) 0, 100% 100%, 0 100%);
}
.paneltabs button::before {
    content: "";
    position: absolute;
    z-index: -1;
    inset: 1px 1px 0 1px;
    background: #d5daea;
    clip-path: polygon(0 3px, 3px 0, calc(100% - 37px) 0, 100% 100%, 0 100%);
}
.paneltabs .active {
    z-index: 1;
}
.paneltabs .active::before {
    background: #f6f6f9;
}
.paneltabs .blank {
    width: 90px;
}
.paneltabs button svg {
    width: 30px;
    height: 30px;
}
.paneltools {
    display: flex;
    height: 20px;
    background: #f6f6f9;
    border-right: 1px solid #9da5b5;
}
.paneltools svg {
    width: 14px;
    height: 14px;
    margin: 0 auto;
}
.paneltools button {
    width: 21px;
}
.layerlist {
    flex: 1;
    background: #fff;
    border: 1px solid #9da5b5;
}
table {
    width: 100%;
    table-layout: fixed;
    border-collapse: collapse;
}
.c-name {
    width: 155px;
}
.c-current {
    width: 19px;
}
.c-icon {
    width: 17px;
}
.c-text {
    width: 80px;
}
th, td {
    padding: 0;
    text-align: left;
    white-space: nowrap;
}
th {
    height: 24px;
    padding-left: 6px;
    border-right: 1px solid #e2e2e2;
    font-weight: normal;
}
th:last-child {
    border-right: 0;
}
td {
    height: 17px;
    padding-left: 3px;
    line-height: 16px;
    border-bottom: 1px dotted #e2e2e2;
}
td:first-child {
    padding-left: 7px;
}
.current td {
    font-weight: bold;
}
.icon svg {
    display: block;
    height: 14px;
}
.tick svg {
    width: 10px;
    height: 10px;
    margin-left: 1px;
}
.bulb {
    width: 10px;
    --glow: #ffffa0;
    --rim: #8a8a10;
}
.bulb.hidden {
    --glow: #4a9be8;
    --rim: #1c5fa8;
}
.lock {
    width: 12px;
}
.color {
    width: 12px;
    height: 12px;
    border: 1px solid #000;
}
.material {
    display: flex;
    align-items: center;
    gap: 5px;
}
.material i {
    flex: none;
    width: 13px;
    height: 13px;
    border: 1px solid #000;
    border-radius: 50%;
}
.print svg {
    width: 13px;
    height: 13px;
    stroke: #000;
}

/* osnap and status bars */
.osnap {
    display: flex;
    align-items: center;
    height: 28px;
    padding: 2px 0 0 5px;
    gap: 7px;
    color: #777;
}
.osnap label {
    display: flex;
    align-items: center;
    gap: 4px;
}
.osnap .on {
    color: #000;
}
.osnap input {
    appearance: none;
    width: 13px;
    height: 13px;
    margin: 0;
    background: #fff;
    border: 1px solid #bfbfbf;
}
.osnap input:checked::before {
    content: "";
    display: block;
    width: 4px;
    height: 8px;
    margin: 0 auto;
    border: solid #999;
    border-width: 0 1px 1px 0;
    transform: rotate(40deg);
}
.osnap .off {
    background: #ccc;
}
.osnap .filled {
    width: 15px;
    height: 15px;
    background: #8c8c8c;
    border: 1px solid #005499;
    outline: 1px solid #d8ecff;
    outline-offset: -2px;
}
.status {
    display: grid;
    grid-template-columns: 57px 88px 88px 88px 88px 173px 77px 46px 54px 54px 85px 66px 109px 45px 1fr;
    height: 21px;
    border-top: 1px solid #a3a8b8;
    font-size: 12px;
    line-height: 18px;
    text-align: center;
}
.status > * {
    border-right: 1px solid #a3a8b8;
}
.status .layer {
    display: flex;
    align-items: center;
    gap: 2px;
    padding-left: 3px;
}
.status i {
    width: 14px;
    height: 14px;
    background: #000;
}
.status .lit {
    background: #e3f3fd;
    font-weight: bold;
}
.status .save {
    border: 0;
    padding-left: 3px;
    text-align: left;
}
```
FILE: script.js
```js
// name, layer colour, material colour
const layers = [
    ["Default", "#000000", "#303030"],
    ["Layer 01", "#c80000", "#c80000"],
    ["Layer 02", "#7d26cd", "#7d26cd"],
    ["Layer 03", "#0000ff", "#0000ff"],
    ["Layer 04", "#008000", "#008000"],
    ["Layer 05", "#ffffff", "#ffffff"],
    ["PlateA", "#0000ff", "#0000ff"],
    ["top1", "#ff0000", "#ff0000"],
    ["Layer 06", "#000000", "#303030"],
    ["connecting1", "#00ffff", "#00ffff"],
    ["top2", "#ff00ff", "#ff00ff"],
    ["drawyer", "#000000", "#303030"],
    ["drawyerbottom", "#000000", "#303030"],
    ["drawyer_act", "#000000", "#303030"],
    ["slide", "#ffbf00", "#ffbf00"],
    ["slidingsupportparts", "#000000", "#303030"],
    ["footrest", "#00ff00", "#00ff00"],
    ["holder", "#8b4513", "#8b4513"],
    ["slidefront", "#000000", "#303030"],
    ["lock", "#000000", "#303030"],
    ["3d", "#000000", "#303030"],
    ["Plate1_18mm", "#000000", "#303030"],
    ["Plate2_18mm", "#000000", "#303030"],
    ["Plate3_12mm", "#000000", "#303030"],
    ["0", "#000000", "#303030"],
    ["Layer_1", "#000000", "#303030"],
    ["engrave", "#000000", "#303030"],
    ["text", "#000000", "#000000", "New mater..."]
];

const body = document.getElementById("layers");
layers.forEach(function ([name, color, material, label], i) {
    const current = i === 0;
    const tr = document.createElement("tr");
    if (current) tr.className = "current";
    tr.innerHTML =
        "<td>" + name + "</td>" +
        "<td class='icon tick'>" + (current ? "<svg><use href='#tick'/></svg>" : "") + "</td>" +
        "<td class='icon'>" + (current ? "" : "<svg class='bulb" + (name === "3d" ? " hidden" : "") + "'><use href='#bulb'/></svg>") + "</td>" +
        "<td class='icon'>" + (current ? "" : "<svg class='lock'><use href='#lock'/></svg>") + "</td>" +
        "<td><div class='color' style='background:" + color + "'></div></td>" +
        "<td><div class='material'><i style='background:" + material + "'></i>" + (label || "") + "</div></td>" +
        "<td>Continuous</td>" +
        "<td class='print'><svg viewBox='0 0 13 13'><path d='M6.5 1L12 6.5 6.5 12 1 6.5z' fill='" + color + "'/></svg></td>" +
        "<td>Default</td><td></td>";
    body.append(tr);
});
```
